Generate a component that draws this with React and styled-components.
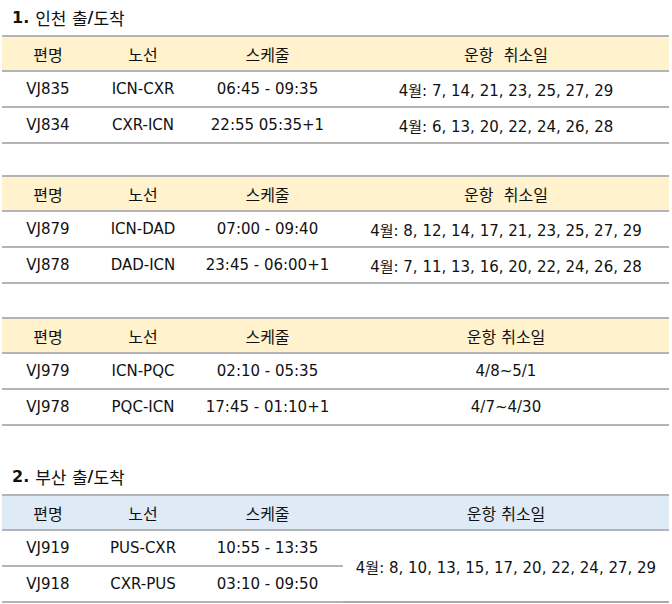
import React from 'react';
import styled, { createGlobalStyle } from 'styled-components';

const GlobalStyle = createGlobalStyle`
  html, body {
    margin: 0;
    padding: 0;
    background: #fff;
  }
  body {
    font-family: "DejaVu Sans", "Noto Sans CJK KR", sans-serif;
    color: #111;
  }
`;

const Page = styled.div`
  width: 672px;
  padding: 0 3px 0 2px;
  box-sizing: border-box;
`;

const Title = styled.h2`
  margin: 0;
  height: 35px;
  display: flex;
  align-items: center;
  padding-left: 10px;
  font-size: 17px;
  font-weight: 400;
  font-family: "DejaVu Sans", "Noto Sans CJK KR", sans-serif;
`;

const Strong = styled.b`
  font-weight: 700;
  font-size: 16px;
  margin-right: ${({ gap }) => gap || 0}px;
`;

const Table = styled.div`
  display: grid;
  grid-template-columns: 92px 98px 151px 1fr;
  border-top: 2px solid #b4b4b4;
  margin-bottom: ${({ space }) => space}px;
`;

const Cell = styled.div`
  display: flex;
  align-items: center;
  justify-content: center;
  height: ${({ head }) => (head ? 33 : 34)}px;
  border-bottom: 2px solid #b4b4b4;
  background: ${({ bg }) => bg || '#fff'};
  font-size: ${({ head }) => (head ? 16 : 15)}px;
  white-space: pre;
`;

const SpanCell = styled(Cell)`
  grid-row: span 2;
  height: auto;
  border-bottom-color: #a9a9a9;
`;

const tables = [
  {
    head: '운항  취소일',
    rows: [
      ['VJ835', 'ICN-CXR', '06:45 - 09:35', '4월: 7, 14, 21, 23, 25, 27, 29'],
      ['VJ834', 'CXR-ICN', '22:55 05:35+1', '4월: 6, 13, 20, 22, 24, 26, 28'],
    ],
    space: 31,
  },
  {
    head: '운항  취소일',
    rows: [
      ['VJ879', 'ICN-DAD', '07:00 - 09:40', '4월: 8, 12, 14, 17, 21, 23, 25, 27, 29'],
      ['VJ878', 'DAD-ICN', '23:45 - 06:00+1', '4월: 7, 11, 13, 16, 20, 22, 24, 26, 28'],
    ],
    space: 33,
  },
  {
    head: '운항 취소일',
    rows: [
      ['VJ979', 'ICN-PQC', '02:10 - 05:35', '4/8~5/1'],
      ['VJ978', 'PQC-ICN', '17:45 - 01:10+1', '4/7~4/30'],
    ],
    space: 33,
  },
];

const CREAM = '#fff2cc';
const BLUE = '#deebf7';

const Header = ({ bg, last }) => (
  <>
    <Cell head bg={bg}>편명</Cell>
    <Cell head bg={bg}>노선</Cell>
    <Cell head bg={bg}>스케줄</Cell>
    <Cell head bg={bg}>{last}</Cell>
  </>
);

const App = () => (
  <Page>
    <GlobalStyle />
    <Title>
      <Strong gap={6}>1.</Strong>인천 출<Strong>/</Strong>도착
    </Title>
    {tables.map((t, i) => (
      <Table key={i} space={t.space}>
        <Header bg={CREAM} last={t.head} />
        {t.rows.map((r) => r.map((c, j) => <Cell key={r[0] + j}>{c}</Cell>))}
      </Table>
    ))}
    <Title>
      <Strong gap={6}>2.</Strong>부산 출<Strong>/</Strong>도착
    </Title>
    <Table space={0}>
      <Header bg={BLUE} last="운항 취소일" />
      <Cell>VJ919</Cell>
      <Cell>PUS-CXR</Cell>
      <Cell>10:55 - 13:35</Cell>
      <SpanCell>4월: 8, 10, 13, 15, 17, 20, 22, 24, 27, 29</SpanCell>
      <Cell>VJ918</Cell>
      <Cell>CXR-PUS</Cell>
      <Cell>03:10 - 09:50</Cell>
    </Table>
  </Page>
);

export default App;
